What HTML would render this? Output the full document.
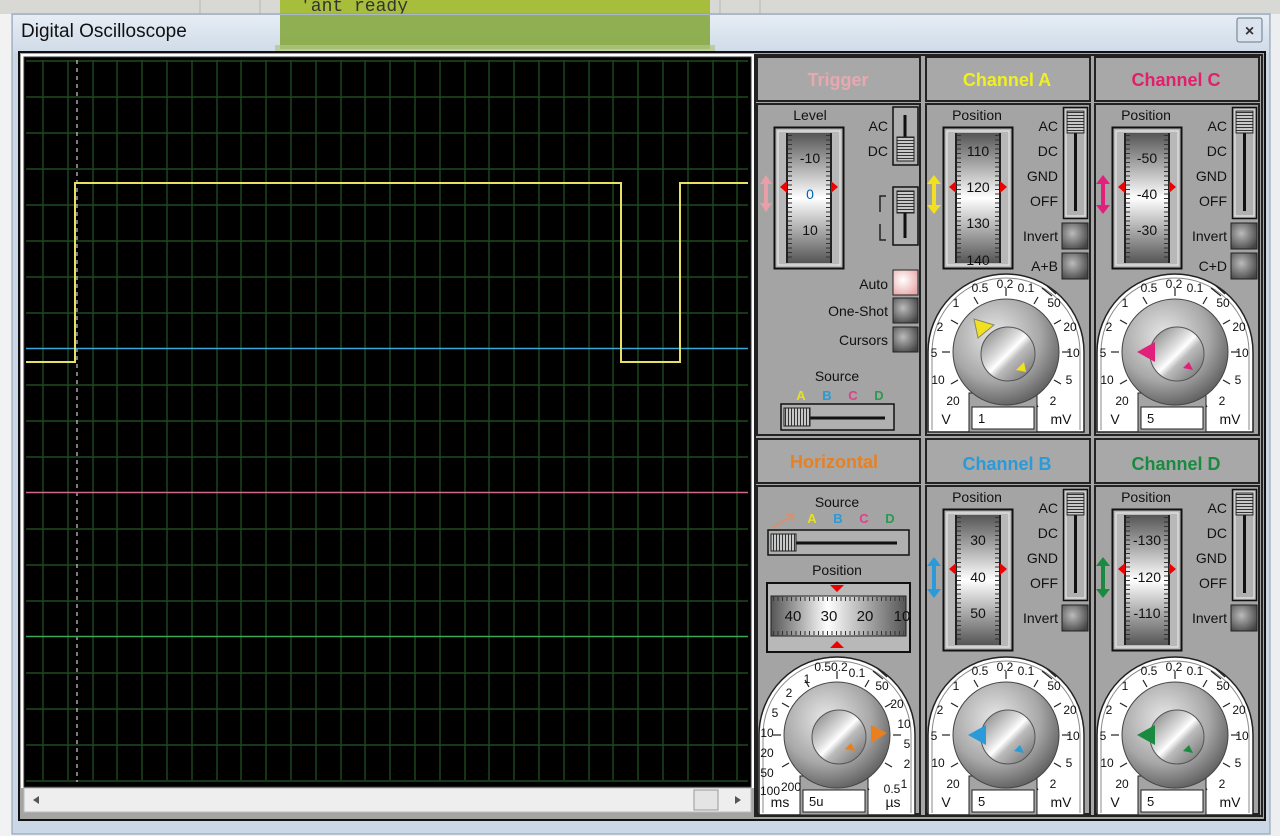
<!DOCTYPE html>
<html><head><meta charset="utf-8"><style>
html,body{margin:0;padding:0;background:#e8e8e8;}
svg{display:block;font-family:"Liberation Sans",sans-serif;}
</style></head><body>
<svg width="1280" height="836" viewBox="0 0 1280 836" xmlns="http://www.w3.org/2000/svg">
<defs>
<linearGradient id="tb" x1="0" y1="0" x2="0" y2="1"><stop offset="0" stop-color="#e6edf5"/><stop offset="1" stop-color="#cfdbe8"/></linearGradient>
<linearGradient id="drumV" x1="0" y1="0" x2="0" y2="1"><stop offset="0" stop-color="#555"/><stop offset="0.45" stop-color="#eee"/><stop offset="0.5" stop-color="#fff"/><stop offset="0.55" stop-color="#eee"/><stop offset="1" stop-color="#555"/></linearGradient>
<linearGradient id="drumH" x1="0" y1="0" x2="1" y2="0"><stop offset="0" stop-color="#555"/><stop offset="0.42" stop-color="#fff"/><stop offset="1" stop-color="#555"/></linearGradient>
<radialGradient id="knob" cx="0.4" cy="0.35" r="0.7"><stop offset="0" stop-color="#e8e8e8"/><stop offset="0.6" stop-color="#a8a8a8"/><stop offset="1" stop-color="#5a5a5a"/></radialGradient>
<linearGradient id="knobIn" x1="0" y1="0" x2="1" y2="1"><stop offset="0" stop-color="#777"/><stop offset="0.4" stop-color="#ddd"/><stop offset="0.5" stop-color="#fff"/><stop offset="0.6" stop-color="#bbb"/><stop offset="1" stop-color="#666"/></linearGradient>
<radialGradient id="btn" cx="0.4" cy="0.4" r="0.7"><stop offset="0" stop-color="#bbb"/><stop offset="1" stop-color="#444"/></radialGradient>
<radialGradient id="btnP" cx="0.4" cy="0.4" r="0.7"><stop offset="0" stop-color="#fff"/><stop offset="1" stop-color="#e8a8a8"/></radialGradient>
<pattern id="hl" width="4" height="3" patternUnits="userSpaceOnUse"><rect width="4" height="3" fill="#c8c8c8"/><rect y="2" width="4" height="1" fill="#333"/></pattern>
<pattern id="vl" width="3" height="4" patternUnits="userSpaceOnUse"><rect width="3" height="4" fill="#c8c8c8"/><rect x="2" width="1" height="4" fill="#333"/></pattern>
<symbol id="dial" viewBox="-82 -82 164 166" width="164" height="166" overflow="visible">
 <path d="M-78,80 L-78,0 A78,78 0 0 1 78,0 L78,80 Z" fill="#fff" stroke="#222" stroke-width="1.5"/>
 <path d="M-74,78 L-74,0 A74,74 0 0 1 74,0 L74,78" fill="none" stroke="#888" stroke-width="1"/>
 <g stroke="#222" stroke-width="1.2">
  <line x1="-56" y1="0" x2="-64" y2="0"/><line x1="56" y1="0" x2="64" y2="0"/>
  <line x1="0" y1="-56" x2="0" y2="-64"/>
  <line x1="-28" y1="-48" x2="-32" y2="-55"/><line x1="-48" y1="-28" x2="-55" y2="-32"/>
  <line x1="-48" y1="28" x2="-55" y2="32"/><line x1="-28" y1="48" x2="-32" y2="55"/>
  <line x1="28" y1="-48" x2="32" y2="-55"/><line x1="48" y1="-28" x2="55" y2="-32"/>
  <line x1="48" y1="28" x2="55" y2="32"/><line x1="28" y1="48" x2="32" y2="55"/>
  <line x1="36" y1="-64" x2="46" y2="-56"/><line x1="40" y1="-67" x2="50" y2="-58"/>
 </g>
 <rect x="-37" y="41" width="68" height="39" fill="#a4a4a4" stroke="#222"/>
 <circle cx="0" cy="0" r="53" fill="url(#knob)" stroke="#444" stroke-width="1"/>
 <circle cx="2" cy="2" r="27" fill="url(#knobIn)" stroke="#555"/>
 <rect x="-34" y="55" width="62" height="22" fill="#fff" stroke="#222"/>
</symbol>
<symbol id="drum" viewBox="0 0 70 142" width="70" height="142" overflow="visible">
 <rect x="0.5" y="0.5" width="69" height="141" fill="#b8b8b8" stroke="#111" stroke-width="2"/>
 <rect x="4" y="4" width="62" height="134" fill="none" stroke="#eee"/>
 <rect x="13" y="6" width="44" height="130" fill="url(#drumV)"/>
 <line x1="13" y1="6" x2="13" y2="136" stroke="#222" stroke-width="2"/>
 <line x1="57" y1="6" x2="57" y2="136" stroke="#222" stroke-width="2"/>
 <line x1="16" y1="8" x2="16" y2="134" stroke="#333" stroke-width="4" stroke-dasharray="1,3.5"/>
 <line x1="54" y1="8" x2="54" y2="134" stroke="#333" stroke-width="4" stroke-dasharray="1,3.5"/>
 <path d="M6,60 L13,54 L13,66 Z" fill="#e00"/>
 <path d="M64,60 L57,54 L57,66 Z" fill="#e00"/>
</symbol>
<symbol id="vsl" viewBox="0 0 25 112" width="25" height="112" overflow="visible">
 <rect x="0.5" y="0.5" width="24" height="111" fill="#b0b0b0" stroke="#111" stroke-width="1.5"/>
 <rect x="3" y="3" width="19" height="106" fill="none" stroke="#eee"/>
 <line x1="12.5" y1="20" x2="12.5" y2="104" stroke="#111" stroke-width="3"/>
 <rect x="4" y="4" width="17" height="22" fill="url(#hl)" stroke="#222"/>
</symbol>
</defs>

<!-- background -->
<rect width="1280" height="836" fill="#eceef0"/>
<rect x="0" y="0" width="1280" height="14" fill="#d8d8d4"/>
<g stroke="#b8b8b0" stroke-width="1"><line x1="200" y1="0" x2="200" y2="14"/><line x1="260" y1="0" x2="260" y2="14"/><line x1="720" y1="0" x2="720" y2="14"/><line x1="760" y1="0" x2="760" y2="14"/></g>
<rect x="280" y="0" width="430" height="14" fill="#a6be3c"/>
<text x="300" y="11" font-size="18" font-family="Liberation Mono, monospace" fill="#333">'ant ready</text>
<rect x="0" y="14" width="12" height="822" fill="#f2f2f2"/>
<!-- window -->
<rect x="12" y="14" width="1258" height="820" fill="#c9d7e6" stroke="#8a9aac"/>
<rect x="13" y="15" width="1256" height="38" fill="url(#tb)"/>
<rect x="280" y="15" width="430" height="34" fill="#86a840" opacity="0.9"/>
<rect x="275" y="45" width="440" height="8" fill="#b0c680" opacity="0.7"/>
<text x="21" y="37" font-size="19" fill="#111">Digital Oscilloscope</text>
<rect x="1237" y="18" width="25" height="24" rx="2" fill="#dbe4ee" stroke="#6a7888"/>
<text x="1249.5" y="36" font-size="16" font-weight="bold" text-anchor="middle" fill="#333">×</text>
<rect x="19" y="52" width="1246" height="768" fill="#a4a4a4" stroke="#111" stroke-width="2"/>
<!-- scope screen -->
<rect x="21" y="54" width="733" height="734" fill="#fff"/>
<rect x="24" y="57" width="727" height="730" fill="#000" stroke="#333"/>
<g stroke="#1e4a1e" stroke-width="1.4">
<line x1="43" y1="60" x2="43" y2="780"/><line x1="68" y1="60" x2="68" y2="780"/><line x1="93" y1="60" x2="93" y2="780"/><line x1="117" y1="60" x2="117" y2="780"/><line x1="142" y1="60" x2="142" y2="780"/><line x1="167" y1="60" x2="167" y2="780"/><line x1="192" y1="60" x2="192" y2="780"/><line x1="217" y1="60" x2="217" y2="780"/><line x1="241" y1="60" x2="241" y2="780"/><line x1="266" y1="60" x2="266" y2="780"/><line x1="291" y1="60" x2="291" y2="780"/><line x1="316" y1="60" x2="316" y2="780"/><line x1="341" y1="60" x2="341" y2="780"/><line x1="365" y1="60" x2="365" y2="780"/><line x1="390" y1="60" x2="390" y2="780"/><line x1="415" y1="60" x2="415" y2="780"/><line x1="440" y1="60" x2="440" y2="780"/><line x1="465" y1="60" x2="465" y2="780"/><line x1="489" y1="60" x2="489" y2="780"/><line x1="514" y1="60" x2="514" y2="780"/><line x1="539" y1="60" x2="539" y2="780"/><line x1="564" y1="60" x2="564" y2="780"/><line x1="589" y1="60" x2="589" y2="780"/><line x1="613" y1="60" x2="613" y2="780"/><line x1="638" y1="60" x2="638" y2="780"/><line x1="663" y1="60" x2="663" y2="780"/><line x1="688" y1="60" x2="688" y2="780"/><line x1="713" y1="60" x2="713" y2="780"/><line x1="737" y1="60" x2="737" y2="780"/>
<line x1="26" y1="61" x2="748" y2="61"/><line x1="26" y1="97" x2="748" y2="97"/><line x1="26" y1="133" x2="748" y2="133"/><line x1="26" y1="169" x2="748" y2="169"/><line x1="26" y1="205" x2="748" y2="205"/><line x1="26" y1="241" x2="748" y2="241"/><line x1="26" y1="277" x2="748" y2="277"/><line x1="26" y1="313" x2="748" y2="313"/><line x1="26" y1="385" x2="748" y2="385"/><line x1="26" y1="421" x2="748" y2="421"/><line x1="26" y1="457" x2="748" y2="457"/><line x1="26" y1="529" x2="748" y2="529"/><line x1="26" y1="565" x2="748" y2="565"/><line x1="26" y1="601" x2="748" y2="601"/><line x1="26" y1="673" x2="748" y2="673"/><line x1="26" y1="709" x2="748" y2="709"/><line x1="26" y1="745" x2="748" y2="745"/><line x1="26" y1="781" x2="748" y2="781"/>
</g>
<line x1="77" y1="60" x2="77" y2="782" stroke="#ccc" stroke-width="1.2" stroke-dasharray="4,4"/>
<line x1="26" y1="348.5" x2="748" y2="348.5" stroke="#3aa8d8" stroke-width="1.6"/>
<line x1="26" y1="492.5" x2="748" y2="492.5" stroke="#d06a8a" stroke-width="1.6"/>
<line x1="26" y1="636.5" x2="748" y2="636.5" stroke="#3aa85a" stroke-width="1.6"/>
<polyline points="26,362 75,362 75,270 75,183 621,183 621,362 680,362 680,183 748,183" fill="none" stroke="#e8e060" stroke-width="2"/>
<!-- scrollbar -->
<rect x="24" y="788" width="727" height="24" fill="#eeeeee" stroke="#bbb"/>
<path d="M39,796 L33,800 L39,804 Z" fill="#555"/>
<path d="M735,796 L741,800 L735,804 Z" fill="#555"/>
<rect x="694" y="790" width="24" height="20" fill="#e4e4e4" stroke="#999"/>

<!-- panel frames -->
<rect x="755" y="55" width="507" height="761" fill="#a6a6a6" stroke="#222" stroke-width="2"/>
<g fill="#a8a8a8" stroke="#222" stroke-width="2">
<rect x="757" y="57" width="163" height="44"/><rect x="926" y="57" width="164" height="44"/><rect x="1095" y="57" width="164" height="44"/>
<rect x="757" y="439" width="163" height="44"/><rect x="926" y="439" width="164" height="44"/><rect x="1095" y="439" width="164" height="44"/>
<rect x="757" y="104" width="163" height="331" fill="#a4a4a4"/><rect x="926" y="104" width="164" height="331" fill="#a4a4a4"/><rect x="1095" y="104" width="164" height="331" fill="#a4a4a4"/>
<rect x="757" y="486" width="163" height="328" fill="#a4a4a4"/><rect x="926" y="486" width="164" height="328" fill="#a4a4a4"/><rect x="1095" y="486" width="164" height="328" fill="#a4a4a4"/>
</g>
<g font-size="18" font-weight="bold" text-anchor="middle">
<text x="838" y="86" fill="#e8a8b0">Trigger</text>
<text x="1007" y="86" fill="#f0f020">Channel A</text>
<text x="1176" y="86" fill="#e0206a">Channel C</text>
<text x="834" y="468" fill="#e88020">Horizontal</text>
<text x="1007" y="470" fill="#2a9ad8">Channel B</text>
<text x="1176" y="470" fill="#1a8a40">Channel D</text>
</g>

<g font-size="14" fill="#111">
<!-- Trigger -->
<text x="810" y="120" text-anchor="middle">Level</text>
<use href="#drum" x="774" y="127"/>
<g font-size="14" text-anchor="middle"><text x="810" y="163">-10</text><text x="810" y="199" fill="#06a">0</text><text x="810" y="235">10</text></g>
<path d="M766,175 L760,184 L772,184 Z M766,212 L760,203 L772,203 Z" fill="#e8a0a8"/><rect x="764" y="182" width="4" height="24" fill="#e8a0a8"/>
<g text-anchor="end"><text x="888" y="131">AC</text><text x="888" y="156">DC</text></g>
<rect x="893" y="107" width="25" height="58" fill="#b0b0b0" stroke="#111" stroke-width="1.5"/>
<line x1="905" y1="115" x2="905" y2="140" stroke="#111" stroke-width="3"/>
<rect x="897" y="137" width="17" height="24" fill="url(#hl)" stroke="#222"/>
<rect x="893" y="187" width="25" height="58" fill="#b0b0b0" stroke="#111" stroke-width="1.5"/>
<rect x="897" y="191" width="17" height="22" fill="url(#hl)" stroke="#222"/>
<line x1="905" y1="213" x2="905" y2="238" stroke="#111" stroke-width="3"/>
<path d="M886,196 L880,196 L880,212 M880,224 L880,240 L886,240" fill="none" stroke="#222" stroke-width="1.5"/>
<g text-anchor="end"><text x="888" y="289">Auto</text><text x="888" y="316">One-Shot</text><text x="888" y="345">Cursors</text></g>
<rect x="893" y="270" width="25" height="25" fill="url(#btnP)" stroke="#222"/>
<rect x="893" y="298" width="25" height="25" fill="url(#btn)" stroke="#222"/>
<rect x="893" y="327" width="25" height="25" fill="url(#btn)" stroke="#222"/>
<text x="837" y="381" text-anchor="middle">Source</text>
<g font-size="13" font-weight="bold" text-anchor="middle"><text x="801" y="400" fill="#e8e020">A</text><text x="827" y="400" fill="#2a9ad8">B</text><text x="853" y="400" fill="#e0408a">C</text><text x="879" y="400" fill="#2a9a50">D</text></g>
<rect x="781" y="404" width="113" height="26" fill="#b0b0b0" stroke="#111" stroke-width="1.5"/>
<line x1="800" y1="418" x2="885" y2="418" stroke="#111" stroke-width="3"/>
<rect x="784" y="408" width="26" height="18" fill="url(#vl)" stroke="#222"/>

<!-- Channel A -->
<text x="977" y="120" text-anchor="middle">Position</text>
<use href="#drum" x="943" y="127"/>
<g text-anchor="middle"><text x="978" y="156">110</text><text x="978" y="192">120</text><text x="978" y="228">130</text><text x="978" y="265">140</text></g>
<path d="M934,175 L927,184 L941,184 Z M934,214 L927,205 L941,205 Z" fill="#f0e020"/><rect x="932" y="182" width="4" height="25" fill="#f0e020"/>
<g text-anchor="end"><text x="1058" y="131">AC</text><text x="1058" y="156">DC</text><text x="1058" y="181">GND</text><text x="1058" y="206">OFF</text><text x="1058" y="241">Invert</text><text x="1058" y="271">A+B</text></g>
<use href="#vsl" x="1063" y="107"/>
<rect x="1062" y="223" width="26" height="26" fill="url(#btn)" stroke="#222"/>
<rect x="1062" y="253" width="26" height="26" fill="url(#btn)" stroke="#222"/>

<!-- Channel C -->
<text x="1146" y="120" text-anchor="middle">Position</text>
<use href="#drum" x="1112" y="127"/>
<g text-anchor="middle"><text x="1147" y="163">-50</text><text x="1147" y="199">-40</text><text x="1147" y="235">-30</text></g>
<path d="M1103,175 L1096,184 L1110,184 Z M1103,214 L1096,205 L1110,205 Z" fill="#e0207a"/><rect x="1101" y="182" width="4" height="25" fill="#e0207a"/>
<g text-anchor="end"><text x="1227" y="131">AC</text><text x="1227" y="156">DC</text><text x="1227" y="181">GND</text><text x="1227" y="206">OFF</text><text x="1227" y="241">Invert</text><text x="1227" y="271">C+D</text></g>
<use href="#vsl" x="1232" y="107"/>
<rect x="1231" y="223" width="26" height="26" fill="url(#btn)" stroke="#222"/>
<rect x="1231" y="253" width="26" height="26" fill="url(#btn)" stroke="#222"/>

<!-- Horizontal -->
<text x="837" y="507" text-anchor="middle">Source</text>
<path d="M772,528 L792,516 M786,515 L793,515 L792,521" fill="none" stroke="#d89070" stroke-width="2"/>
<g font-size="13" font-weight="bold" text-anchor="middle"><text x="812" y="523" fill="#e8e020">A</text><text x="838" y="523" fill="#2a9ad8">B</text><text x="864" y="523" fill="#e0408a">C</text><text x="890" y="523" fill="#2a9a50">D</text></g>
<rect x="768" y="530" width="141" height="25" fill="#b0b0b0" stroke="#111" stroke-width="1.5"/>
<line x1="790" y1="543" x2="897" y2="543" stroke="#111" stroke-width="3"/>
<rect x="771" y="534" width="25" height="17" fill="url(#vl)" stroke="#222"/>
<text x="837" y="575" text-anchor="middle">Position</text>
<rect x="767" y="583" width="143" height="69" fill="#b8b8b8" stroke="#111" stroke-width="2"/>
<rect x="771" y="596" width="135" height="40" fill="url(#drumH)" stroke="#222"/>
<line x1="773" y1="599" x2="904" y2="599" stroke="#333" stroke-width="4" stroke-dasharray="1,3.5"/>
<line x1="773" y1="633" x2="904" y2="633" stroke="#333" stroke-width="4" stroke-dasharray="1,3.5"/>
<path d="M837,592 L830,585 L844,585 Z M837,641 L830,648 L844,648 Z" fill="#e00"/>
<g text-anchor="middle" font-size="15"><text x="793" y="621">40</text><text x="829" y="621">30</text><text x="865" y="621">20</text><text x="902" y="621">10</text></g>

<!-- Channel B -->
<text x="977" y="502" text-anchor="middle">Position</text>
<use href="#drum" x="943" y="509"/>
<g text-anchor="middle"><text x="978" y="545">30</text><text x="978" y="582">40</text><text x="978" y="618">50</text></g>
<path d="M934,557 L927,566 L941,566 Z M934,598 L927,589 L941,589 Z" fill="#2a9ad8"/><rect x="932" y="564" width="4" height="27" fill="#2a9ad8"/>
<g text-anchor="end"><text x="1058" y="513">AC</text><text x="1058" y="538">DC</text><text x="1058" y="563">GND</text><text x="1058" y="588">OFF</text><text x="1058" y="623">Invert</text></g>
<use href="#vsl" x="1063" y="489"/>
<rect x="1062" y="605" width="26" height="26" fill="url(#btn)" stroke="#222"/>

<!-- Channel D -->
<text x="1146" y="502" text-anchor="middle">Position</text>
<use href="#drum" x="1112" y="509"/>
<g text-anchor="middle"><text x="1147" y="545">-130</text><text x="1147" y="582">-120</text><text x="1147" y="618">-110</text></g>
<path d="M1103,557 L1096,566 L1110,566 Z M1103,598 L1096,589 L1110,589 Z" fill="#1a8a40"/><rect x="1101" y="564" width="4" height="27" fill="#1a8a40"/>
<g text-anchor="end"><text x="1227" y="513">AC</text><text x="1227" y="538">DC</text><text x="1227" y="563">GND</text><text x="1227" y="588">OFF</text><text x="1227" y="623">Invert</text></g>
<use href="#vsl" x="1232" y="489"/>
<rect x="1231" y="605" width="26" height="26" fill="url(#btn)" stroke="#222"/>
</g>

<!-- Dials -->
<use href="#dial" x="924" y="270"/>
<use href="#dial" x="1093" y="270"/>
<use href="#dial" x="924" y="653"/>
<use href="#dial" x="1093" y="653"/>
<use href="#dial" x="755" y="653"/>

<g font-size="12" fill="#111" text-anchor="middle">
<!-- A: center 1006,352 -->
<g transform="translate(1006,352)">
<text x="-26" y="-60">0.5</text><text x="-1" y="-64">0.2</text><text x="20" y="-60">0.1</text>
<text x="-50" y="-45">1</text><text x="-66" y="-21">2</text><text x="-72" y="5">5</text><text x="-68" y="32">10</text><text x="-53" y="53">20</text>
<text x="48" y="-45">50</text><text x="64" y="-21">20</text><text x="67" y="5">10</text><text x="63" y="32">5</text><text x="47" y="53">2</text>
<text x="-60" y="72" font-size="14">V</text><text x="55" y="72" font-size="14">mV</text>
<text x="-28" y="71" font-size="13" text-anchor="start">1</text>
<path d="M-32,-33 L-12,-27 L-28,-14 Z" fill="#f0e020" stroke="#886"/>
<path d="M18,10 L10,18 L20,20 Z" fill="#f0e020"/>
</g>
<g transform="translate(1175,352)">
<text x="-26" y="-60">0.5</text><text x="-1" y="-64">0.2</text><text x="20" y="-60">0.1</text>
<text x="-50" y="-45">1</text><text x="-66" y="-21">2</text><text x="-72" y="5">5</text><text x="-68" y="32">10</text><text x="-53" y="53">20</text>
<text x="48" y="-45">50</text><text x="64" y="-21">20</text><text x="67" y="5">10</text><text x="63" y="32">5</text><text x="47" y="53">2</text>
<text x="-60" y="72" font-size="14">V</text><text x="55" y="72" font-size="14">mV</text>
<text x="-28" y="71" font-size="13" text-anchor="start">5</text>
<path d="M-38,0 L-20,-10 L-20,10 Z" fill="#e0207a"/>
<path d="M14,10 L8,16 L18,18 Z" fill="#e0207a"/>
</g>
<g transform="translate(1006,735)">
<text x="-26" y="-60">0.5</text><text x="-1" y="-64">0.2</text><text x="20" y="-60">0.1</text>
<text x="-50" y="-45">1</text><text x="-66" y="-21">2</text><text x="-72" y="5">5</text><text x="-68" y="32">10</text><text x="-53" y="53">20</text>
<text x="48" y="-45">50</text><text x="64" y="-21">20</text><text x="67" y="5">10</text><text x="63" y="32">5</text><text x="47" y="53">2</text>
<text x="-60" y="72" font-size="14">V</text><text x="55" y="72" font-size="14">mV</text>
<text x="-28" y="71" font-size="13" text-anchor="start">5</text>
<path d="M-38,0 L-20,-10 L-20,10 Z" fill="#2a9ad8"/>
<path d="M14,10 L8,16 L18,18 Z" fill="#2a9ad8"/>
</g>
<g transform="translate(1175,735)">
<text x="-26" y="-60">0.5</text><text x="-1" y="-64">0.2</text><text x="20" y="-60">0.1</text>
<text x="-50" y="-45">1</text><text x="-66" y="-21">2</text><text x="-72" y="5">5</text><text x="-68" y="32">10</text><text x="-53" y="53">20</text>
<text x="48" y="-45">50</text><text x="64" y="-21">20</text><text x="67" y="5">10</text><text x="63" y="32">5</text><text x="47" y="53">2</text>
<text x="-60" y="72" font-size="14">V</text><text x="55" y="72" font-size="14">mV</text>
<text x="-28" y="71" font-size="13" text-anchor="start">5</text>
<path d="M-38,0 L-20,-10 L-20,10 Z" fill="#1a8a40"/>
<path d="M14,10 L8,16 L18,18 Z" fill="#1a8a40"/>
</g>
<g transform="translate(837,735)">
<text x="-6" y="-64">0.50.2</text><text x="20" y="-58">0.1</text>
<text x="-30" y="-52">1</text><text x="-48" y="-38">2</text><text x="-62" y="-18">5</text><text x="-70" y="2">10</text><text x="-70" y="22">20</text><text x="-70" y="42">50</text><text x="-67" y="60">100</text><text x="-46" y="56">200</text>
<text x="45" y="-45">50</text><text x="60" y="-27">20</text><text x="67" y="-7">10</text><text x="70" y="13">5</text><text x="70" y="33">2</text><text x="67" y="53">1</text><text x="55" y="58">0.5</text>
<text x="-57" y="72" font-size="14">ms</text><text x="56" y="72" font-size="14">µs</text>
<text x="-28" y="71" font-size="13" text-anchor="start">5u</text>
<path d="M50,-2 L34,-10 L34,8 Z" fill="#e88020"/>
<path d="M14,8 L8,14 L18,16 Z" fill="#e88020"/>
</g>
</g>
</svg>
</body></html>
